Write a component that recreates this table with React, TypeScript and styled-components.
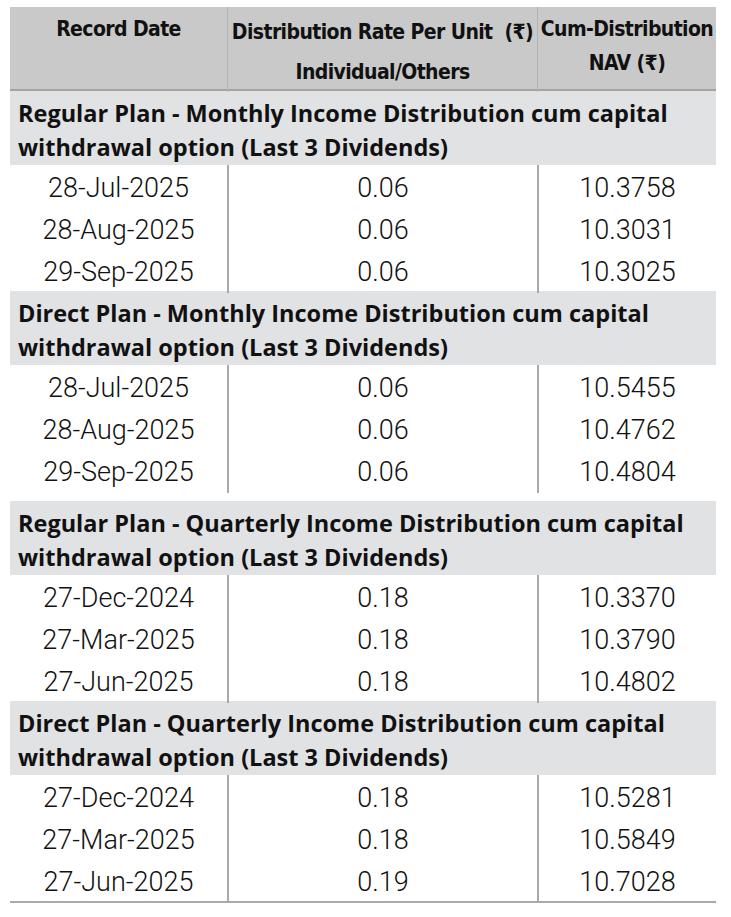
import styled, { createGlobalStyle } from 'styled-components';

const GlobalStyle = createGlobalStyle`
  body {
    margin: 0;
    background: #fff;
  }
`;

type Row = { date: string; rate: string; nav: string };
type Group = { title: string; rows: Row[]; gap?: boolean };

const groups: Group[] = [
  {
    title: 'Regular Plan - Monthly Income Distribution cum capital\nwithdrawal option (Last 3 Dividends)',
    rows: [
      { date: '28-Jul-2025', rate: '0.06', nav: '10.3758' },
      { date: '28-Aug-2025', rate: '0.06', nav: '10.3031' },
      { date: '29-Sep-2025', rate: '0.06', nav: '10.3025' },
    ],
  },
  {
    title: 'Direct Plan - Monthly Income Distribution cum capital\nwithdrawal option (Last 3 Dividends)',
    rows: [
      { date: '28-Jul-2025', rate: '0.06', nav: '10.5455' },
      { date: '28-Aug-2025', rate: '0.06', nav: '10.4762' },
      { date: '29-Sep-2025', rate: '0.06', nav: '10.4804' },
    ],
  },
  {
    title: 'Regular Plan - Quarterly Income Distribution cum capital\nwithdrawal option (Last 3 Dividends)',
    gap: true,
    rows: [
      { date: '27-Dec-2024', rate: '0.18', nav: '10.3370' },
      { date: '27-Mar-2025', rate: '0.18', nav: '10.3790' },
      { date: '27-Jun-2025', rate: '0.18', nav: '10.4802' },
    ],
  },
  {
    title: 'Direct Plan - Quarterly Income Distribution cum capital\nwithdrawal option (Last 3 Dividends)',
    rows: [
      { date: '27-Dec-2024', rate: '0.18', nav: '10.5281' },
      { date: '27-Mar-2025', rate: '0.18', nav: '10.5849' },
      { date: '27-Jun-2025', rate: '0.19', nav: '10.7028' },
    ],
  },
];

const App = () => {
  return (
    <>
      <GlobalStyle />
      <Page>
        <Table>
          <HeadRow>
            <HeadCell $lh={34}>Record Date</HeadCell>
            <HeadCell $lh={40}>
              Distribution Rate Per Unit&nbsp;&nbsp;(₹)
              <br />
              Individual/Others
            </HeadCell>
            <HeadCell $lh={34}>
              Cum-Distribution
              <br />
              NAV (₹)
            </HeadCell>
          </HeadRow>
          {groups.map((g) => (
            <GroupBlock key={g.title} $gap={g.gap}>
              <SectionTitle>{g.title}</SectionTitle>
              {g.rows.map((r) => (
                <DataRow key={r.date + r.nav}>
                  <DataCell>{r.date}</DataCell>
                  <DataCell>{r.rate}</DataCell>
                  <DataCell>{r.nav}</DataCell>
                </DataRow>
              ))}
            </GroupBlock>
          ))}
        </Table>
      </Page>
    </>
  );
};

const Page = styled.div`
  padding: 7px 0 0 10px;
`;

const Table = styled.div`
  width: 706px;
  border-bottom: 2px solid #a9a9a9;
  color: #111;
`;

const HeadRow = styled.div`
  display: grid;
  grid-template-columns: 217px 310px 179px;
  height: 84px;
  background: #c9c9c9;
  border-bottom: 2px solid #a3a3a3;
  box-sizing: border-box;
`;

const HeadCell = styled.div<{ $lh: number }>`
  font-family: 'DejaVu Sans Condensed', 'DejaVu Sans', sans-serif;
  font-stretch: condensed;
  font-weight: 700;
  font-size: 21px;
  letter-spacing: -0.6px;
  line-height: ${(p) => p.$lh}px;
  text-align: center;
  padding-top: 5px;
  white-space: nowrap;
  & + & {
    border-left: 1px solid #b3b3b3;
  }
`;

const GroupBlock = styled.div<{ $gap?: boolean }>`
  margin-top: ${(p) => (p.$gap ? '10px' : '0')};
`;

const SectionTitle = styled.div`
  background: #e1e2e4;
  font-family: 'Open Sans', 'Liberation Sans', sans-serif;
  font-weight: 700;
  font-size: 23.5px;
  line-height: 34px;
  padding: 5px 8px 1px 8px;
  white-space: pre-line;
`;

const DataRow = styled.div`
  display: grid;
  grid-template-columns: 217px 310px 179px;
  height: 42px;
`;

const DataCell = styled.div`
  font-family: Roboto, 'Liberation Sans', sans-serif;
  font-weight: 300;
  font-size: 27px;
  line-height: 42px;
  text-align: center;
  padding-top: 2px;
  & + & {
    border-left: 2px solid #a9a9a9;
  }
`;

export default App;
